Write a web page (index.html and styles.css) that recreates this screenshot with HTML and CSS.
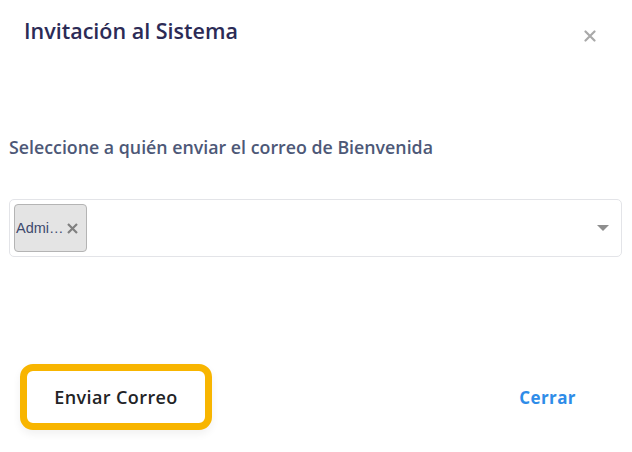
FILE: index.html
```html
<!DOCTYPE html>
<html lang="es">
<head>
<meta charset="utf-8">
<link rel="stylesheet" href="styles.css">
</head>
<body>
<div class="modal">
  <div class="header">
    <h2 class="title">Invitación al Sistema</h2>
    <svg class="close" width="12" height="12" viewBox="0 0 12 12"><path d="M1.5 1.5L10.5 10.5M10.5 1.5L1.5 10.5" stroke="#a9a9a9" stroke-width="2.2" stroke-linecap="round"/></svg>
  </div>
  <div class="body">
    <p class="label">Seleccione a quién enviar el correo de Bienvenida</p>
    <div class="select">
      <span class="chip"><span class="chip-text">Admi…</span><svg class="chip-x" width="13" height="13" viewBox="0 0 13 13"><path d="M2 2L11 11M11 2L2 11" stroke="#808080" stroke-width="2.2"/></svg></span>
      <span class="arrow"></span>
    </div>
  </div>
  <div class="footer">
    <button class="btn-send">Enviar Correo</button>
    <button class="btn-close">Cerrar</button>
  </div>
</div>
</body>
</html>
```
FILE: styles.css
```css
html, body { margin: 0; padding: 0; background: #fff; }
body { font-family: "Open Sans", sans-serif; width: 632px; height: 452px; overflow: hidden; }
.modal { display: flex; flex-direction: column; height: 452px; }
.header { display: flex; justify-content: space-between; align-items: flex-start; padding: 17px 36px 0 24px; height: 90px; box-sizing: border-box; }
.title { margin: 0; font-size: 21.5px; font-weight: 600; color: #2c2b56; line-height: 28px; }
.close { margin-top: 13px; margin-right: 0; }
.body { padding: 0 10px 0 9px; }
.label { margin: 0; padding-top: 45px; font-size: 17.8px; font-weight: 600; color: #4d5877; line-height: 24px; }
.select { margin-top: 40px; height: 58px; box-sizing: border-box; border: 1px solid #e3e4e8; border-radius: 5px; display: flex; align-items: center; padding: 0 12px 0 4px; justify-content: space-between; }
.chip { display: flex; align-items: center; height: 48px; box-sizing: border-box; width: 73px; background: #e4e4e4; border: 1px solid #b4b4b4; border-radius: 4px; padding: 0 0 0 1px; font-family: "Liberation Sans", Arial, sans-serif; }
.chip-text { font-size: 14.5px; color: #3e4a6e; }
.chip-x { margin-left: 2px; }
.arrow { width: 0; height: 0; border-left: 6px solid transparent; border-right: 6px solid transparent; border-top: 6px solid #8e8e8e; }
.footer { margin-top: auto; display: flex; justify-content: space-between; align-items: center; padding: 0 56px 22px 20px; }
.btn-send { width: 192px; height: 66px; box-sizing: border-box; border: 7px solid #f8b500; border-radius: 13px; background: #fff; font-family: "Open Sans", sans-serif; font-size: 18px; font-weight: 600; color: #222326; letter-spacing: 0.4px; box-shadow: 0 4px 8px rgba(0,0,0,0.06); padding: 0; }
.btn-close { border: none; background: none; font-family: "Open Sans", sans-serif; font-size: 17px; font-weight: 700; color: #2e8ce8; padding: 0; letter-spacing: 0.4px; }
```
